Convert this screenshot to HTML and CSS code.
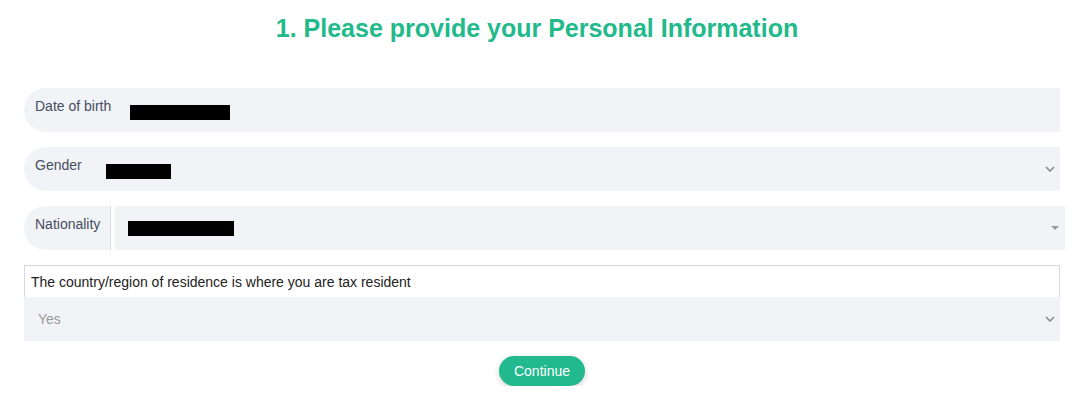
FILE: index.html
```html
<!DOCTYPE html>
<html lang="en">
<head>
    <meta charset="UTF-8">
    <meta name="viewport" content="width=device-width, initial-scale=1.0">
    <title>Personal Information</title>
    <link rel="stylesheet" href="styles.css">
</head>
<body>
    <h1 class="title">1. Please provide your Personal Information</h1>
    <form class="form">
        <div class="row">
            <label class="label">Date of birth</label>
            <div class="value value-dob"><span class="mask" style="width: 100px;"></span></div>
        </div>

        <div class="row">
            <label class="label label-short">Gender</label>
            <div class="value value-gender"><span class="mask" style="width: 65px;"></span></div>
            <svg class="chevron" width="10" height="6" viewBox="0 0 10 6"><path d="M1 1l4 4 4-4" fill="none" stroke="#8a8a8a" stroke-width="1.6"/></svg>
        </div>

        <div class="row row-split">
            <label class="label label-box">Nationality</label>
            <div class="field">
                <span class="mask" style="width: 106px;"></span>
                <svg class="caret" width="8" height="4" viewBox="0 0 8 4"><path d="M0 0h8L4 4z" fill="#999"/></svg>
            </div>
        </div>

        <div class="residence">
            <div class="note">The country/region of residence is where you are tax resident</div>
            <div class="select">
                <span class="placeholder">Yes</span>
                <svg class="chevron" width="10" height="6" viewBox="0 0 10 6"><path d="M1 1l4 4 4-4" fill="none" stroke="#8a8a8a" stroke-width="1.6"/></svg>
            </div>
        </div>

        <div class="actions">
            <button type="button" class="btn">Continue</button>
        </div>
    </form>
</body>
</html>
```

FILE: styles.css
```css
body {
    font-family: "Liberation Sans", Arial, sans-serif;
    margin: 0;
    padding: 0 19px 0 24px;
    background: #fff;
}
.title {
    margin: 12px -14px 0 -24px;
    text-align: center;
    font-size: 25px;
    line-height: 33px;
    font-weight: bold;
    color: #22b98b;
}
.form {
    margin-top: 43px;
}
.row {
    display: flex;
    align-items: center;
    height: 44px;
    width: 1036px;
    background: #f2f3f7;
    border-radius: 22px 0 0 22px;
    margin-bottom: 15px;
    position: relative;
}
.label {
    align-self: flex-start;
    padding: 10px 0 0 11px;
    font-size: 14px;
    line-height: 16px;
    color: #454f5f;
}
.value {
    display: flex;
    align-items: center;
    padding-top: 4px;
}
.value-dob {
    margin-left: 19px;
}
.value-gender {
    margin-left: 24px;
}
.mask {
    display: inline-block;
    height: 15px;
    background: #000;
}
.chevron {
    position: absolute;
    right: 5px;
    top: 19px;
}
.row-split {
    width: 1041px;
    background: #fff;
}
.label-box {
    height: 34px;
    width: 75px;
    background: #f2f3f7;
    border-radius: 22px 0 0 22px;
    border-right: 1px solid #dcdcdc;
    align-self: stretch;
    white-space: nowrap;
}
.field {
    display: flex;
    align-items: center;
    flex: 1;
    height: 44px;
    margin-left: 4px;
    padding-left: 13px;
    background: #f2f3f7;
    position: relative;
    box-sizing: border-box;
}
.caret {
    position: absolute;
    right: 6px;
    top: 20px;
}
.residence {
    width: 1036px;
}
.note {
    box-sizing: border-box;
    height: 32px;
    padding: 7px 6px 0;
    border: 1px solid #d8d6e0;
    border-bottom: none;
    font-size: 14px;
    line-height: 18px;
    color: #222;
}
.select {
    position: relative;
    height: 44px;
    background: #f2f3f7;
    display: flex;
    align-items: center;
    padding-left: 14px;
}
.placeholder {
    font-size: 14px;
    color: #9a9a9a;
}
.actions {
    display: flex;
    justify-content: center;
    margin-top: 15px;
    width: 1036px;
}
.btn {
    height: 30px;
    padding: 0 15px;
    border: none;
    border-radius: 15px;
    background: #23b98e;
    color: #fff;
    font-family: "Liberation Sans", Arial, sans-serif;
    font-size: 14px;
    box-shadow: 0 2px 6px rgba(0,0,0,0.18);
    cursor: pointer;
}
```
